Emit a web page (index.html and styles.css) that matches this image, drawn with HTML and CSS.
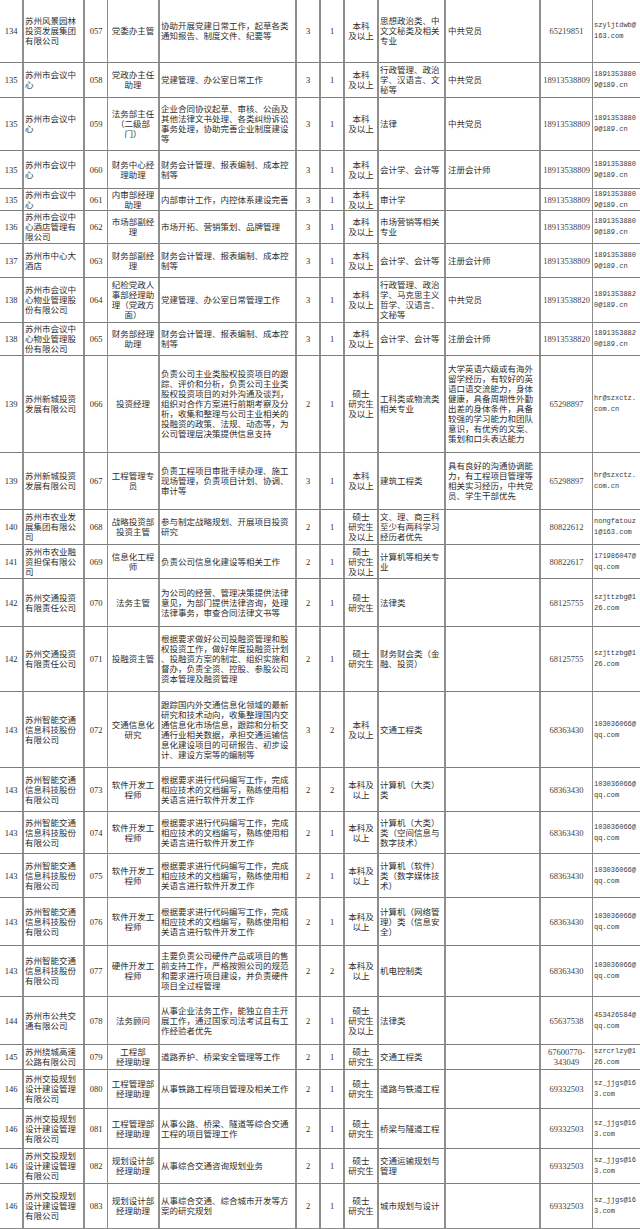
FILE: index.html
```html
<!DOCTYPE html>
<html lang="zh-CN">
<head>
<meta charset="utf-8">
<title>岗位表</title>
<link rel="stylesheet" href="styles.css">
</head>
<body>
<div class="sheet">
  <div class="row"><div>134</div><div>苏州风景园林<br>投资发展集团<br>有限公司</div><div>057</div><div>党委办主管</div><div>协助开展党建日常工作，起草各类<br>通知报告、制度文件、纪要等</div><div>3</div><div>1</div><div>本科<br>及以上</div><div>思想政治类、中<br>文文秘类及相关<br>专业</div><div>中共党员</div><div>65219851</div><div>szyljtdwb@<br>163.com</div></div>
  <div class="row"><div>135</div><div>苏州市会议中<br>心</div><div>058</div><div>党政办主任<br>助理</div><div>党建管理、办公室日常工作</div><div>3</div><div>1</div><div>本科<br>及以上</div><div>行政管理、政治<br>学、汉语言、文<br>秘等</div><div>中共党员</div><div>18913538809</div><div>1891353880<br>9@189.cn</div></div>
  <div class="row"><div>135</div><div>苏州市会议中<br>心</div><div>059</div><div>法务部主任<br>（二级部<br>门）</div><div>企业合同协议起草、审核、公函及<br>其他法律文书处理、各类纠纷诉讼<br>事务处理，协助完善企业制度建设<br>等</div><div>3</div><div>1</div><div>本科<br>及以上</div><div>法律</div><div>中共党员</div><div>18913538809</div><div>1891353880<br>9@189.cn</div></div>
  <div class="row"><div>135</div><div>苏州市会议中<br>心</div><div>060</div><div>财务中心经<br>理助理</div><div>财务会计管理、报表编制、成本控<br>制等</div><div>3</div><div>1</div><div>本科<br>及以上</div><div>会计学、会计等</div><div>注册会计师</div><div>18913538809</div><div>1891353880<br>9@189.cn</div></div>
  <div class="row"><div>135</div><div>苏州市会议中<br>心</div><div>061</div><div>内审部经理<br>助理</div><div>内部审计工作，内控体系建设完善</div><div>3</div><div>1</div><div>本科<br>及以上</div><div>审计学</div><div></div><div>18913538809</div><div>1891353880<br>9@189.cn</div></div>
  <div class="row"><div>136</div><div>苏州市会议中<br>心酒店管理有<br>限公司</div><div>062</div><div>市场部副经<br>理</div><div>市场开拓、营销策划、品牌管理</div><div>3</div><div>1</div><div>本科<br>及以上</div><div>市场营销等相关<br>专业</div><div></div><div>18913538809</div><div>1891353880<br>9@189.cn</div></div>
  <div class="row"><div>137</div><div>苏州市中心大<br>酒店</div><div>063</div><div>财务部副经<br>理</div><div>财务会计管理、报表编制、成本控<br>制等</div><div>3</div><div>1</div><div>本科<br>及以上</div><div>会计学、会计等</div><div>注册会计师</div><div>18913538809</div><div>1891353880<br>9@189.cn</div></div>
  <div class="row"><div>138</div><div>苏州市会议中<br>心物业管理股<br>份有限公司</div><div>064</div><div>纪检党政人<br>事部经理助<br>理（党政方<br>面）</div><div>党建管理、办公室日常管理工作</div><div>3</div><div>1</div><div>本科<br>及以上</div><div>行政管理、政治<br>学、马克思主义<br>哲学、汉语言、<br>文秘等</div><div>中共党员</div><div>18913538820</div><div>1891353882<br>0@189.cn</div></div>
  <div class="row"><div>138</div><div>苏州市会议中<br>心物业管理股<br>份有限公司</div><div>065</div><div>财务部经理<br>助理</div><div>财务会计管理、报表编制、成本控<br>制等</div><div>3</div><div>1</div><div>本科<br>及以上</div><div>会计学、会计等</div><div>注册会计师</div><div>18913538820</div><div>1891353882<br>0@189.cn</div></div>
  <div class="row"><div>139</div><div>苏州新城投资<br>发展有限公司</div><div>066</div><div>投资经理</div><div>负责公司主业类股权投资项目的跟<br>踪、评价和分析，负责公司主业类<br>股权投资项目的对外沟通及谈判，<br>组织对合作方案进行前期考察及分<br>析，收集和整理与公司主业相关的<br>投融资的政策、法规、动态等，为<br>公司管理层决策提供信息支持</div><div>2</div><div>1</div><div>硕士<br>研究生<br>及以上</div><div>工科类或物流类<br>相关专业</div><div>大学英语六级或有海外<br>留学经历，有较好的英<br>语口语交流能力，身体<br>健康，具备周期性外勤<br>出差的身体条件，具备<br>较强的学习能力和团队<br>意识，有优秀的文案、<br>策划和口头表达能力</div><div>65298897</div><div>hr@szxctz.<br>com.cn</div></div>
  <div class="row"><div>139</div><div>苏州新城投资<br>发展有限公司</div><div>067</div><div>工程管理专<br>员</div><div>负责工程项目审批手续办理、施工<br>现场管理，负责项目计划、协调、<br>审计等</div><div>3</div><div>1</div><div>本科<br>及以上</div><div>建筑工程类</div><div>具有良好的沟通协调能<br>力，有工程项目管理等<br>相关实习经历，中共党<br>员、学生干部优先</div><div>65298897</div><div>hr@szxctz.<br>com.cn</div></div>
  <div class="row"><div>140</div><div>苏州市农业发<br>展集团有限公<br>司</div><div>068</div><div>战略投资部<br>投资主管</div><div>参与制定战略规划、开展项目投资<br>研究</div><div>2</div><div>1</div><div>硕士<br>研究生<br>及以上</div><div>文、理、商三科<br>至少有两科学习<br>经历者优先</div><div></div><div>80822612</div><div>nongfatouz<br>i@163.com</div></div>
  <div class="row"><div>141</div><div>苏州市农业融<br>资担保有限公<br>司</div><div>069</div><div>信息化工程<br>师</div><div>负责公司信息化建设等相关工作</div><div>2</div><div>1</div><div>硕士<br>研究生<br>及以上</div><div>计算机等相关专<br>业</div><div></div><div>80822617</div><div>171986047@<br>qq.com</div></div>
  <div class="row"><div>142</div><div>苏州交通投资<br>有限责任公司</div><div>070</div><div>法务主管</div><div>为公司的经营、管理决策提供法律<br>意见，为部门提供法律咨询，处理<br>法律事务，审查合同法律文书等</div><div>2</div><div>1</div><div>硕士<br>研究生</div><div>法律类</div><div></div><div>68125755</div><div>szjttzbg@1<br>26.com</div></div>
  <div class="row"><div>142</div><div>苏州交通投资<br>有限责任公司</div><div>071</div><div>投融资主管</div><div>根据要求做好公司投融资管理和股<br>权投资工作，做好年度投融资计划<br>、投融资方案的制定、组织实施和<br>督办，负责全资、控股、参股公司<br>资本管理及融资管理</div><div>2</div><div>1</div><div>硕士<br>研究生</div><div>财务财会类（金<br>融、投资）</div><div></div><div>68125755</div><div>szjttzbg@1<br>26.com</div></div>
  <div class="row"><div>143</div><div>苏州智能交通<br>信息科技股份<br>有限公司</div><div>072</div><div>交通信息化<br>研究</div><div>跟踪国内外交通信息化领域的最新<br>研究和技术动向，收集整理国内交<br>通信息化市场信息，跟踪和分析交<br>通行业相关数据，承担交通运输信<br>息化建设项目的可研报告、初步设<br>计、建设方案等的编制等</div><div>3</div><div>2</div><div>本科<br>及以上</div><div>交通工程类</div><div></div><div>68363430</div><div>103036066@<br>qq.com</div></div>
  <div class="row"><div>143</div><div>苏州智能交通<br>信息科技股份<br>有限公司</div><div>073</div><div>软件开发工<br>程师</div><div>根据要求进行代码编写工作，完成<br>相应技术的文档编写，熟练使用相<br>关语言进行软件开发工作</div><div>2</div><div>2</div><div>本科及<br>以上</div><div>计算机（大类）<br>类</div><div></div><div>68363430</div><div>103036066@<br>qq.com</div></div>
  <div class="row"><div>143</div><div>苏州智能交通<br>信息科技股份<br>有限公司</div><div>074</div><div>软件开发工<br>程师</div><div>根据要求进行代码编写工作，完成<br>相应技术的文档编写，熟练使用相<br>关语言进行软件开发工作</div><div>2</div><div>1</div><div>本科及<br>以上</div><div>计算机（大类）<br>类（空间信息与<br>数字技术）</div><div></div><div>68363430</div><div>103036066@<br>qq.com</div></div>
  <div class="row"><div>143</div><div>苏州智能交通<br>信息科技股份<br>有限公司</div><div>075</div><div>软件开发工<br>程师</div><div>根据要求进行代码编写工作，完成<br>相应技术的文档编写，熟练使用相<br>关语言进行软件开发工作</div><div>2</div><div>1</div><div>本科及<br>以上</div><div>计算机（软件）<br>类（数字媒体技<br>术）</div><div></div><div>68363430</div><div>103036066@<br>qq.com</div></div>
  <div class="row"><div>143</div><div>苏州智能交通<br>信息科技股份<br>有限公司</div><div>076</div><div>软件开发工<br>程师</div><div>根据要求进行代码编写工作，完成<br>相应技术的文档编写，熟练使用相<br>关语言进行软件开发工作</div><div>2</div><div>1</div><div>本科及<br>以上</div><div>计算机（网络管<br>理）类（信息安<br>全）</div><div></div><div>68363430</div><div>103036066@<br>qq.com</div></div>
  <div class="row"><div>143</div><div>苏州智能交通<br>信息科技股份<br>有限公司</div><div>077</div><div>硬件开发工<br>程师</div><div>主要负责公司硬件产品或项目的售<br>前支持工作，严格按照公司的规范<br>和要求进行项目建设，并负责硬件<br>项目全过程管理</div><div>2</div><div>2</div><div>本科及<br>以上</div><div>机电控制类</div><div></div><div>68363430</div><div>103036066@<br>qq.com</div></div>
  <div class="row"><div>144</div><div>苏州市公共交<br>通有限公司</div><div>078</div><div>法务顾问</div><div>从事企业法务工作，能独立自主开<br>展工作，通过国家司法考试且有工<br>作经验者优先</div><div>2</div><div>1</div><div>硕士<br>研究生<br>及以上</div><div>法律类</div><div></div><div>65637538</div><div>453426584@<br>qq.com</div></div>
  <div class="row"><div>145</div><div>苏州绕城高速<br>公路有限公司</div><div>079</div><div>工程部<br>经理助理</div><div>道路养护、桥梁安全管理等工作</div><div>2</div><div>1</div><div>硕士<br>研究生</div><div>交通工程类</div><div></div><div>67600770-<br>343049</div><div>szrcrlzy@1<br>26.com</div></div>
  <div class="row"><div>146</div><div>苏州交投规划<br>设计建设管理<br>有限公司</div><div>080</div><div>工程管理部<br>经理助理</div><div>从事铁路工程项目管理及相关工作</div><div>2</div><div>1</div><div>硕士<br>研究生</div><div>道路与铁道工程</div><div></div><div>69332503</div><div>sz_jjgs@16<br>3.com</div></div>
  <div class="row"><div>146</div><div>苏州交投规划<br>设计建设管理<br>有限公司</div><div>081</div><div>工程管理部<br>经理助理</div><div>从事公路、桥梁、隧道等综合交通<br>工程的项目管理工作</div><div>2</div><div>1</div><div>硕士<br>研究生</div><div>桥梁与隧道工程</div><div></div><div>69332503</div><div>sz_jjgs@16<br>3.com</div></div>
  <div class="row"><div>146</div><div>苏州交投规划<br>设计建设管理<br>有限公司</div><div>082</div><div>规划设计部<br>经理助理</div><div>从事综合交通咨询规划业务</div><div>2</div><div>1</div><div>硕士<br>研究生</div><div>交通运输规划与<br>管理</div><div></div><div>69332503</div><div>sz_jjgs@16<br>3.com</div></div>
  <div class="row"><div>146</div><div>苏州交投规划<br>设计建设管理<br>有限公司</div><div>083</div><div>规划设计部<br>经理助理</div><div>从事综合交通、综合城市开发等方<br>案的研究规划</div><div>2</div><div>1</div><div>硕士<br>研究生</div><div>城市规划与设计</div><div></div><div>69332503</div><div>sz_jjgs@16<br>3.com</div></div>
</div>
</body>
</html>
```

FILE: styles.css
```css
html, body {
  margin: 0;
  padding: 0;
  background: #ffffff;
}

.sheet {
  display: grid;
  width: 640px;
  grid-template-columns: 24px 61px 23px 52px 137px 24px 24px 34px 67px 95px 52px 47px;
  grid-template-rows: 63px 35px 53px 38px 22px 33px 34px 45px 33px 97px 57px 35px 34px 48px 65px 76px 44px 42px 44px 48px 51px 48px 25px 39px 40px 35px 44px;
  font-family: "Liberation Serif", "Noto Sans CJK SC", serif;
  font-size: 8.5px;
  line-height: 10px;
  color: #2e2e2e;
  border-bottom: 1px solid #8a8a8a;
}

.row {
  display: contents;
}

.row > div {
  box-sizing: border-box;
  display: flex;
  align-items: center;
  justify-content: center;
  text-align: center;
  white-space: nowrap;
  overflow: hidden;
  border-right: 2px solid #8e8e8e;
  border-bottom: 1px solid #7e7e7e;
  padding: 0 1px;
}

.row:last-child > div {
  border-bottom: none;
}

/* left-aligned text columns */
.row > div:nth-child(2),
.row > div:nth-child(5),
.row > div:nth-child(9),
.row > div:nth-child(10),
.row > div:nth-child(12) {
  justify-content: flex-start;
  text-align: left;
}

.row > div:nth-child(10) {
  padding-left: 2px;
}

/* thinner dividers */
.row > div:nth-child(3),
.row > div:nth-child(11) {
  border-right-width: 1px;
}

.row > div:nth-child(12) {
  border-right: none;
  font-family: "Liberation Mono", "Noto Sans CJK SC", monospace;
  font-size: 7px;
  line-height: 11px;
  color: #3a3a3a;
}

.row > div:nth-child(11) {
  color: #444444;
}
```
